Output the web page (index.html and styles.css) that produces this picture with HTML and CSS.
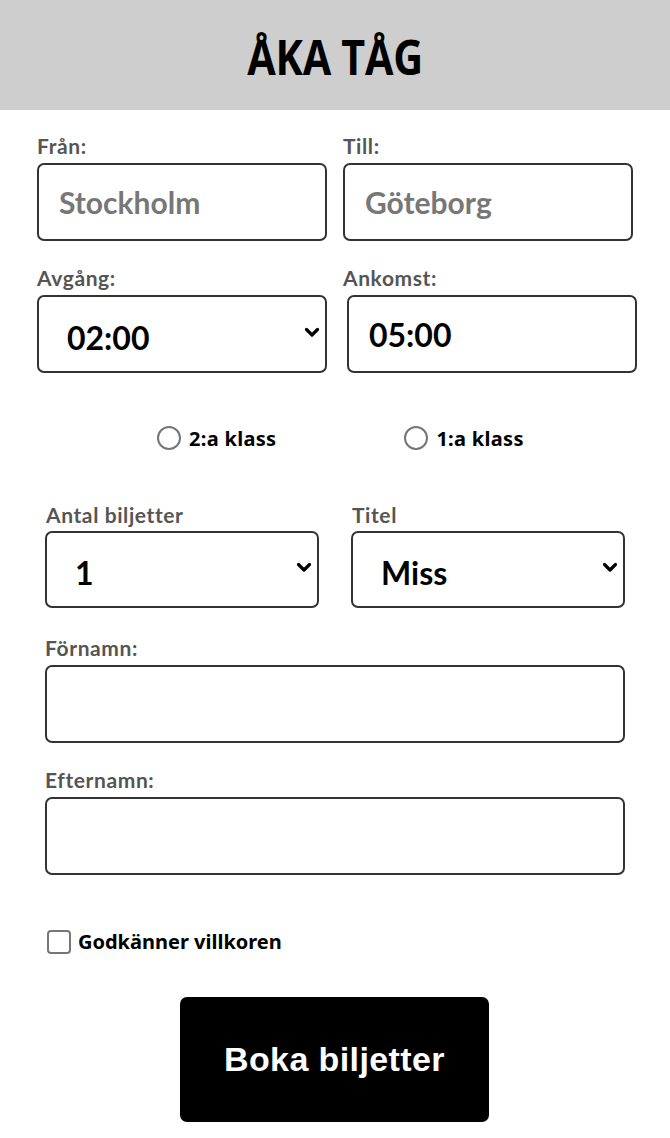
FILE: index.html
```html
<!DOCTYPE html>
<html lang="sv">
<head>
<meta charset="utf-8">
<title>Åka tåg</title>
<link rel="stylesheet" href="styles.css">
</head>
<body>
<header class="top">
  <h1 class="title">ÅKA TÅG</h1>
</header>
<form class="booking">
  <div class="row row-top">
    <div class="field">
      <label class="lbl" for="from">Från:</label>
      <input class="box txt" id="from" type="text" placeholder="Stockholm">
    </div>
    <div class="field">
      <label class="lbl" for="to">Till:</label>
      <input class="box txt" id="to" type="text" placeholder="Göteborg">
    </div>
  </div>
  <div class="row row-time">
    <div class="field">
      <label class="lbl" for="dep">Avgång:</label>
      <div class="sel-wrap">
        <select class="box sel" id="dep"><option>02:00</option></select>
        <svg class="chev" viewBox="0 0 16 11" width="16" height="11"><path d="M2.5 2.5 L8 8 L13.5 2.5" fill="none" stroke="#000" stroke-width="3.2" stroke-linecap="round" stroke-linejoin="round"/></svg>
      </div>
    </div>
    <div class="field">
      <label class="lbl" for="arr">Ankomst:</label>
      <input class="box val shift" id="arr" type="text" value="05:00">
    </div>
  </div>
  <div class="row radios">
    <label class="opt"><input class="radio" type="radio" name="klass"><span>2:a klass</span></label>
    <label class="opt opt-2"><input class="radio" type="radio" name="klass"><span>1:a klass</span></label>
  </div>
  <div class="row row-pass">
    <div class="field narrow">
      <label class="lbl" for="cnt">Antal biljetter</label>
      <div class="sel-wrap">
        <select class="box sel" id="cnt"><option>1</option></select>
        <svg class="chev" viewBox="0 0 16 11" width="16" height="11"><path d="M2.5 2.5 L8 8 L13.5 2.5" fill="none" stroke="#000" stroke-width="3.2" stroke-linecap="round" stroke-linejoin="round"/></svg>
      </div>
    </div>
    <div class="field narrow">
      <label class="lbl" for="tit">Titel</label>
      <div class="sel-wrap">
        <select class="box sel" id="tit"><option>Miss</option></select>
        <svg class="chev" viewBox="0 0 16 11" width="16" height="11"><path d="M2.5 2.5 L8 8 L13.5 2.5" fill="none" stroke="#000" stroke-width="3.2" stroke-linecap="round" stroke-linejoin="round"/></svg>
      </div>
    </div>
  </div>
  <div class="row wide first">
    <div class="field full">
      <label class="lbl" for="fn">Förnamn:</label>
      <input class="box txt" id="fn" type="text">
    </div>
  </div>
  <div class="row wide second">
    <div class="field full">
      <label class="lbl" for="ln">Efternamn:</label>
      <input class="box txt" id="ln" type="text">
    </div>
  </div>
  <div class="row terms">
    <label class="opt"><input class="check" type="checkbox"><span>Godkänner villkoren</span></label>
  </div>
  <div class="row actions">
    <button class="submit" type="button">Boka biljetter</button>
  </div>
</form>
</body>
</html>
```
FILE: styles.css
```css
* { box-sizing: border-box; }
html, body { margin: 0; padding: 0; background: #fff; }
body { font-family: Lato, "Noto Sans", sans-serif; }

.top {
  height: 110px;
  background: #cecece;
  display: flex;
  align-items: center;
  justify-content: center;
}
.title {
  margin: 0;
  font-family: "Open Sans", "Noto Sans", sans-serif;
  font-weight: bold;
  font-size: 48px;
  letter-spacing: -0.3px;
  color: #000;
  line-height: 1;
  padding-top: 4px;
  transform: scaleX(0.86);
}

.booking { display: flex; flex-direction: column; }

.row { display: flex; }
.row-top { padding: 24px 0 0 37px; gap: 16px; }
.row-time { padding: 25px 0 0 37px; gap: 16px; }
.row-pass { padding: 0 0 0 45px; gap: 32px; margin-top: 52px; }
.wide { padding: 0 45px; }
.wide.first { padding-top: 28px; }
.wide.second { padding-top: 25px; }

.field { display: flex; flex-direction: column; width: 290px; }
.field.narrow { width: 274px; }
.field.full { width: 580px; }

.lbl {
  font-size: 21px;
  font-weight: bold;
  color: #555;
  line-height: 24px;
  height: 24px;
  margin-bottom: 5px;
  letter-spacing: 0.6px;
}
.narrow .lbl { padding-left: 1px; margin-bottom: 4px; }

.box {
  display: block;
  width: 100%;
  height: 78px;
  border: 2px solid #333;
  border-radius: 7px;
  background: #fff;
  margin: 0;
  font-family: Lato, "Noto Sans", sans-serif;
  font-weight: bold;
  outline: none;
}
.txt { font-size: 30px; padding: 0 20px; color: #000; }
.txt::placeholder { color: #777; opacity: 1; }
.val { font-size: 32px; padding: 0 20px; color: #000; }
.shift { margin-left: 4px; }

.sel-wrap { position: relative; }
.sel {
  -webkit-appearance: none;
  appearance: none;
  font-size: 32px;
  color: #000;
  padding: 6px 28px 0 28px;
}
.narrow .sel { height: 77px; }
.chev { position: absolute; right: 7px; top: 32px; }
.row-pass .chev { top: 31px; }

.radios { margin-top: 52px; padding-left: 157px; height: 26px; align-items: center; }
.opt {
  display: flex;
  align-items: center;
  gap: 8px;
  font-family: "Noto Sans", sans-serif;
  font-weight: bold;
  font-size: 20px;
  color: #000;
}
.radios .opt span { letter-spacing: 0.3px; }
.opt-2 { margin-left: 128px; }
.radio {
  -webkit-appearance: none;
  appearance: none;
  margin: 0;
  width: 24px;
  height: 24px;
  border: 2px solid #767676;
  border-radius: 50%;
  background: #fff;
}
.terms { padding-left: 47px; margin-top: 53px; }
.terms .opt { gap: 7px; }
.check {
  -webkit-appearance: none;
  appearance: none;
  margin: 0;
  width: 24px;
  height: 24px;
  border: 2px solid #767676;
  border-radius: 4px;
  background: #fff;
}

.actions { justify-content: flex-start; padding-left: 180px; margin-top: 42px; }
.submit {
  width: 309px;
  height: 125px;
  border: 0;
  border-radius: 7px;
  background: #000;
  color: #fff;
  font-family: "Liberation Sans", Arial, sans-serif;
  font-weight: bold;
  font-size: 34px;
  letter-spacing: 0.4px;
  cursor: pointer;
}
```
